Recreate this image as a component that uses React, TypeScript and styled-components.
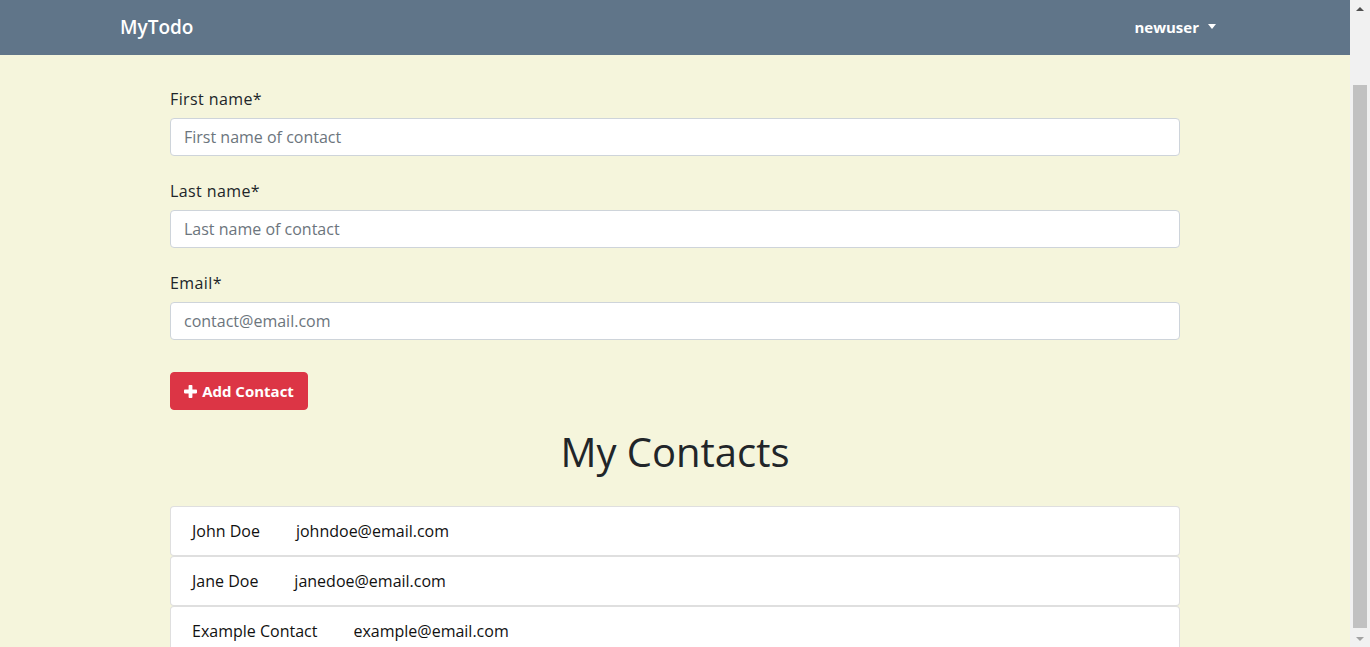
import React from "react";
import styled, { createGlobalStyle } from "styled-components";

const GlobalStyle = createGlobalStyle`
  html, body {
    margin: 0;
    padding: 0;
  }
  body {
    background: #f5f5dc;
    color: #212529;
    font-family: "Comic Sans MS", "Open Sans", sans-serif;
    font-size: 16px;
    line-height: 1.5;
  }
  * {
    box-sizing: border-box;
  }
`;

const Page = styled.div`
  margin-right: 20px;
`;

const Navbar = styled.nav`
  background: #607589;
  height: 55px;
  display: flex;
  justify-content: center;
`;

const NavInner = styled.div`
  width: 1110px;
  display: flex;
  align-items: center;
  justify-content: space-between;
`;

const Brand = styled.a`
  color: #fff;
  font-size: 19px;
  font-weight: 600;
  text-decoration: none;
`;

const UserToggle = styled.a`
  color: #fff;
  font-size: 15px;
  font-weight: 700;
  padding: 0 14px 0 8px;
  display: flex;
  align-items: center;
  gap: 9px;
  &::after {
    content: "";
    border-top: 5px solid #fff;
    border-left: 4.5px solid transparent;
    border-right: 4.5px solid transparent;
    margin-top: -2px;
  }
`;

const Main = styled.main`
  width: 1010px;
  margin: 0 auto;
  padding: 32px 0 60px;
`;

const FormGroup = styled.div`
  margin-bottom: 23px;
`;

const Label = styled.label`
  display: block;
  font-size: 16px;
  line-height: 24px;
  margin-bottom: 7px;
  letter-spacing: 0.4px;
`;

const Input = styled.input`
  display: block;
  width: 100%;
  height: 38px;
  padding: 6px 13px;
  font-family: inherit;
  font-size: 16px;
  color: #495057;
  background: #fff;
  border: 1px solid #ced4da;
  border-radius: 4px;
  &::placeholder {
    color: #6c757d;
  }
`;

const AddButton = styled.button`
  margin-top: 9px;
  height: 38px;
  width: 138px;
  display: inline-flex;
  align-items: center;
  justify-content: center;
  gap: 5px;
  background: #dc3545;
  border: 1px solid #dc3545;
  border-radius: 4px;
  color: #fff;
  font-family: inherit;
  font-size: 15px;
  font-weight: 700;
`;

const Title = styled.h1`
  margin: 18px 0 30px;
  text-align: center;
  font-size: 40px;
  font-weight: 500;
  line-height: 1.2;
`;

const List = styled.ul`
  list-style: none;
  margin: 0;
  padding: 0;
`;

const Item = styled.li`
  height: 50px;
  display: flex;
  align-items: center;
  padding: 0 21px;
  background: #fff;
  border: 1px solid rgba(0, 0, 0, 0.125);
  border-radius: 4px;
  font-size: 16px;
  color: #111;
`;

const Name = styled.span`
  margin-right: 36px;
`;

// fake browser scrollbar drawn over the right edge, as in the screenshot
const Scrollbar = styled.div`
  position: fixed;
  top: 0;
  right: 0;
  bottom: 0;
  width: 20px;
  background: #f1f1f1;
  display: flex;
  flex-direction: column;
  align-items: center;
`;

const ScrollArrow = styled.div<{ $down?: boolean }>`
  height: 17px;
  width: 100%;
  display: flex;
  align-items: center;
  justify-content: center;
  &::after {
    content: "";
    border-left: 4px solid transparent;
    border-right: 4px solid transparent;
    ${(p) =>
      p.$down ? "border-top: 4px solid #a3a3a3;" : "border-bottom: 4px solid #505050;"}
  }
`;

const ScrollTrack = styled.div`
  flex: 1;
  width: 100%;
  display: flex;
  justify-content: center;
  padding-top: 68px;
  padding-bottom: 2px;
`;

const ScrollThumb = styled.div`
  width: 14px;
  height: 100%;
  background: #c1c1c1;
`;

const PlusIcon = () => (
  <svg width="13" height="13" viewBox="0 0 13 13" fill="#fff">
    <rect x="4.6" y="0" width="3.8" height="13" rx="0.8" />
    <rect x="0" y="4.6" width="13" height="3.8" rx="0.8" />
  </svg>
);

const fields = [
  { label: "First name*", placeholder: "First name of contact" },
  { label: "Last name*", placeholder: "Last name of contact" },
  { label: "Email*", placeholder: "contact@email.com" },
];

const contacts = [
  { name: "John Doe", email: "johndoe@email.com" },
  { name: "Jane Doe", email: "janedoe@email.com" },
  { name: "Example Contact", email: "example@email.com" },
];

export default function App() {
  return (
    <>
      <GlobalStyle />
      <Page>
        <Navbar>
          <NavInner>
            <Brand>MyTodo</Brand>
            <UserToggle>newuser</UserToggle>
          </NavInner>
        </Navbar>
        <Main>
          <form>
            {fields.map((f) => (
              <FormGroup key={f.label}>
                <Label>{f.label}</Label>
                <Input placeholder={f.placeholder} />
              </FormGroup>
            ))}
            <AddButton type="button">
              <PlusIcon /> Add Contact
            </AddButton>
          </form>
          <Title>My Contacts</Title>
          <List>
            {contacts.map((c) => (
              <Item key={c.email}>
                <Name>{c.name}</Name>
                {c.email}
              </Item>
            ))}
          </List>
        </Main>
      </Page>
      <Scrollbar>
        <ScrollArrow />
        <ScrollTrack>
          <ScrollThumb />
        </ScrollTrack>
        <ScrollArrow $down />
      </Scrollbar>
    </>
  );
}
